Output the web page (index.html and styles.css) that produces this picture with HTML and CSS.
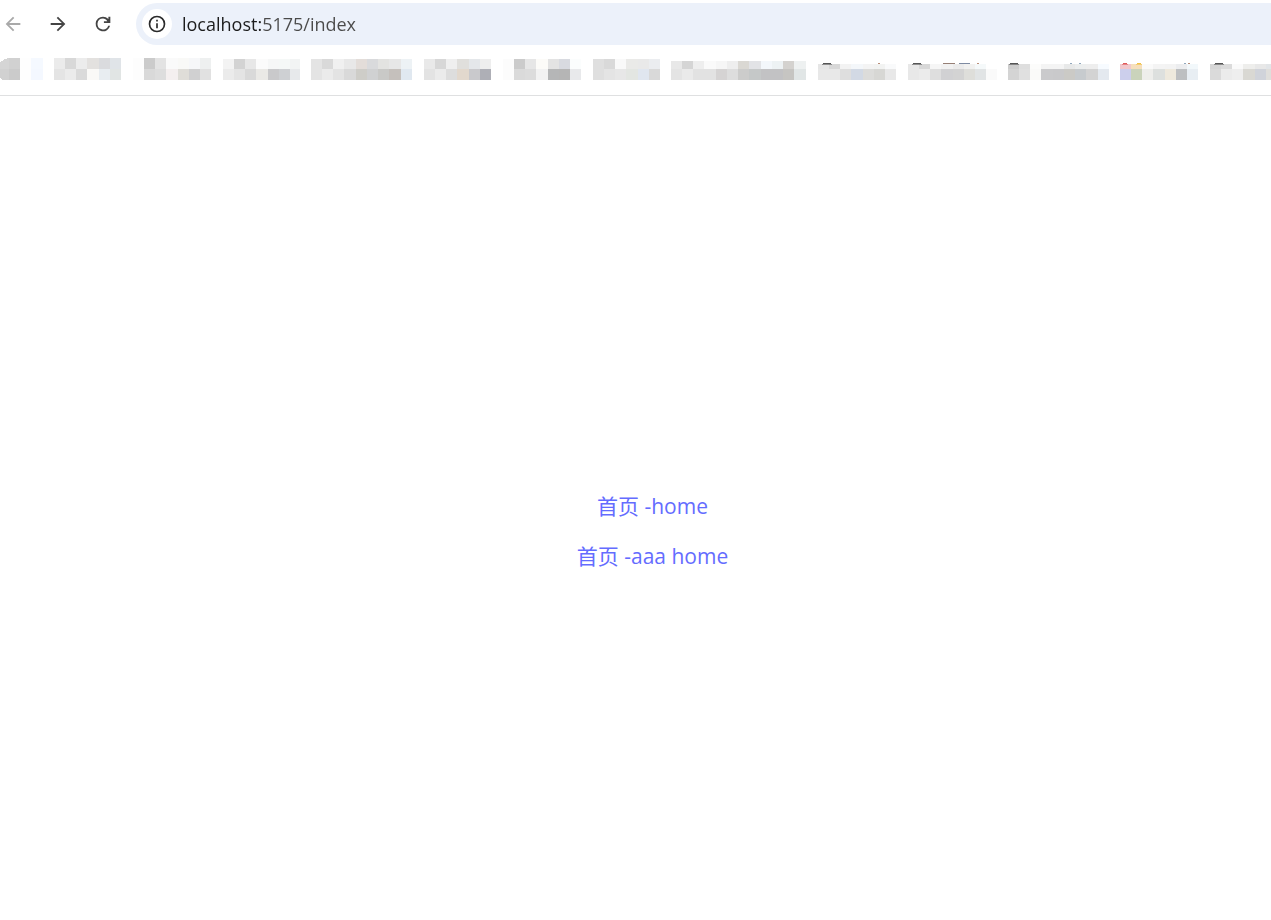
FILE: index.html
```html
<!DOCTYPE html>
<html lang="zh">
<head>
  <meta charset="UTF-8">
  <title>首页</title>
  <link rel="stylesheet" href="styles.css">
</head>
<body>
  <header>
    <div class="toolbar">
      <button class="nav-btn" aria-label="Back" disabled>
        <svg viewBox="0 0 24 24"><path d="M20 11H7.83l5.59-5.59L12 4l-8 8 8 8 1.41-1.41L7.83 13H20v-2z"/></svg>
      </button>
      <button class="nav-btn" aria-label="Forward">
        <svg viewBox="0 0 24 24"><path d="M12 4l-1.41 1.41L16.17 11H4v2h12.17l-5.58 5.59L12 20l8-8z"/></svg>
      </button>
      <button class="nav-btn" aria-label="Reload">
        <svg viewBox="0 0 24 24"><path d="M17.65 6.35A7.96 7.96 0 0 0 12 4a8 8 0 1 0 7.73 10h-2.08A6 6 0 1 1 12 6c1.9 0 3.6.9 4.7 2.9H13V11H20V4h-2.1v2.6z"/></svg>
      </button>
      <div class="address">
        <button class="info-btn" aria-label="Site information">
          <svg viewBox="0 0 24 24"><path d="M11 17h2v-6h-2v6zm1-15a10 10 0 1 0 0 20 10 10 0 0 0 0-20zm0 18a8 8 0 1 1 0-16 8 8 0 0 1 0 16zM11 9h2V7h-2v2z"/></svg>
        </button>
        <input type="text" class="url" aria-label="Address" value="localhost:5175/index">
      </div>
    </div>
    <nav class="bookmarks" id="bookmarks"></nav>
  </header>

  <main>
    <a href="#home">首页 -home</a>
    <a href="#aaa">首页 -aaa home</a>
  </main>

  <script src="bookmarks.js"></script>
</body>
</html>
```
FILE: styles.css
```css
body {
  margin: 0;
  min-height: 100vh;
  display: flex;
  flex-direction: column;
  font-family: "Open Sans", "Noto Sans CJK SC", sans-serif;
  background: white;
  overflow-x: hidden;
}

header {
  border-bottom: 1px solid #dfe0e1;
}

button {
  border: none;
  padding: 0;
  cursor: pointer;
}

.toolbar {
  display: flex;
  align-items: center;
  gap: 21px;
  padding: 3px 0 0 1px;
}

.nav-btn {
  width: 24px;
  height: 24px;
  display: flex;
  align-items: center;
  justify-content: center;
  background: none;
}

.nav-btn svg {
  width: 22px;
  height: 22px;
  fill: #444;
}

.nav-btn:disabled svg {
  fill: #a9a9a9;
}

.address {
  flex: 1;
  display: flex;
  align-items: center;
  gap: 10px;
  height: 42px;
  padding-left: 6px;
  background: #ecf1fa;
  border-radius: 21px 0 0 21px;
}

.info-btn {
  width: 30px;
  height: 30px;
  display: flex;
  align-items: center;
  justify-content: center;
  background: white;
  border-radius: 50%;
}

.info-btn svg {
  width: 20px;
  height: 20px;
  fill: #2a2a2a;
}

/* host is darker than the path */
.url {
  flex: 1;
  min-width: 0;
  padding: 0;
  border: none;
  outline: none;
  font-family: inherit;
  font-size: 18px;
  line-height: 28px;
  color: #4a4a4a;
  background: linear-gradient(to right, #1c1c1c 80px, #4a4a4a 80px);
  -webkit-background-clip: text;
  background-clip: text;
  -webkit-text-fill-color: transparent;
}

.bookmarks {
  display: flex;
  gap: 11px;
  padding: 13px 0 15px;
  overflow: hidden;
}

.bookmarks a {
  flex: none;
}

.bookmarks svg {
  display: block;
  height: 22px;
}

main {
  flex: 1;
  display: flex;
  flex-direction: column;
  align-items: center;
  justify-content: center;
  gap: 20px;
  padding: 46px 0 0 34px;
}

main a {
  color: #646cff;
  font-size: 21px;
  line-height: 30px;
  text-decoration: none;
}
```
FILE: bookmarks.js
```javascript
// Masked bookmarks: two rows of colour cells each.
// w = width, top = start of the first row, marks = [x, width, colour] above it
const bookmarks = [
  { w: 43, top: 0, round: true, rows: ["d5d5d5 d1d1d1 fefefe f5f9ff", "d1d1d1 cbcbcb fefefe f4f8ff"], edges: [0, 9, 20, 31, 43] },
  { w: 68, top: 0, rows: ["ebebeb d8d8d8 ececec e3e1df dadbde e0e4e8", "e4e4e4 ebebeb dadada faf9f7 e8edf1 e1e5e4"] },
  { w: 79, top: 0, rows: ["fdfdfd cbcbcb e3e3e3 fafafa f9f9f7 f6f7f9 eef0f0", "fdfdfd d9d9d9 dddddd f4efef dfddd8 d0d0d1 e1e1e1"] },
  { w: 77, top: 1, rows: ["f3f3f3 d3d3d3 e7e7e7 fbfbfb f6f7f7 f5f8f7 f2f4f4", "ebebeb e4e4e4 d9d9d9 eae9e6 c9c9cb ced0d3 e7e9eb"] },
  { w: 102, top: 1, rows: ["e4e4e4 d9d9d9 f0f0f0 e8e8e8 e3ddd9 d9dadc e3e3e1 e7e7e7 edf2f5", "e4e4e4 ebebeb e3e3e3 d9d9d9 cecdc8 d0d1d2 c9c9c7 c5c0bc e0e8f0"] },
  { w: 68, top: 1, rows: ["e9e9e9 d7d7d7 efefef e0dfdc e4e7ea eeeeee", "e3e3e3 ebebeb dddddd e2d8cd c9c9cc aeafb6"] },
  { w: 79, top: 1, rows: ["fcfcfc cbcbcb e6e6e6 fcfbf8 e3e3e3 d8dae0 fbfdfd", "fcfcfc dadada dcdcdc f2f2f2 b5b6b7 b5b5b5 e8e9eb"] },
  { w: 67, top: 1, rows: ["dfdfdf d9d9d9 f9f9f9 eaeae8 e9e9e9 ebedf0", "dfdfdf e4e4e4 e7e7e7 e3e6e2 e0e6ef d9d9d9"] },
  { w: 136, top: 3, rows: ["e8e8e8 d5d5d5 eeeeee fafafa f6f6f6 eeeeee dad8d3 e2e3e6 f3f7fb edf2f4 d4d2cf eef1f1", "e4e4e4 eaeaea e2e2e2 e2e2e2 d5d3d3 dddddd cccccb c5c8c8 c2c2c4 c2c2c4 c6c5c2 e1e6e6"] },
  { w: 79, top: 6, rows: ["e6e6e6 d8d8d8 f3f3f3 f4f7fa f4f4f4 f2f3f2 f9fafb", "e8e8e8 e8e8e8 dedede d2d9e4 dcdcda d7d7d4 e8e8e8"], marks: [[5, 8, "555555"], [60, 2, "b98d78"]] },
  { w: 89, top: 6, rows: ["e8e8e8 d8d8d8 f6f6f6 f1f1f1 ebebeb f1f1f0 f5f9fa ffffff", "e8e8e8 ebebeb dedede d1d1d3 d3d3d3 dededa e1e4e5 fafafa"], marks: [[5, 8, "555555"], [35, 12, "967f75"], [51, 11, "7e8ba2"], [69, 2, "b98d78"]] },
  { w: 101, top: 6, rows: ["cdcdcd dedede fcfcfb f4f4f4 f4f4f4 e8e9e9 eceeee eeeeee f7fbff", "d4d4d4 e0e0e0 fafaf9 cacacc c9c9cb cbcac6 c7cbce d3d3d3 e4e9ef"], marks: [[2, 8, "555555"], [62, 2, "91a8bd"], [71, 2, "91a8bd"]] },
  { w: 79, top: 6, rows: ["f1c8cc f5dfbc fafafa f4f4f4 f3f3f3 ecedef f2f8fb", "cccfec cad3bb eeeeeb dde0de eee9dd bdbfc1 e8eef3"], marks: [[3, 4, "e05a5a"], [17, 4, "f2c144"], [64, 2, "91a8bd"], [68, 2, "b98d78"]] },
  { w: 79, top: 6, rows: ["d6d6d6 dbdbdb fafafa eeeeec e8e8e8 e2e5e8 e8e8e8", "dadada ebebeb eeeeee d9d8d3 d0d3da dfdedb e0e0e0"], marks: [[5, 8, "555555"]] }
];

const CELL = 11.25;
const MIDDLE = 11;
const HEIGHT = 22;

function rect(x, y, width, height, color) {
  return `<rect x="${x}" y="${y}" width="${width}" height="${height}" fill="#${color}"/>`;
}

function drawBookmark(item) {
  let shapes = "";
  item.rows.forEach((row, r) => {
    const y = r === 0 ? item.top : MIDDLE;
    const height = r === 0 ? MIDDLE - item.top : HEIGHT - MIDDLE;
    row.split(" ").forEach((color, i) => {
      const left = item.edges ? item.edges[i] : Math.floor(i * CELL);
      const right = item.edges ? item.edges[i + 1] : Math.floor((i + 1) * CELL);
      shapes += rect(left, y, right - left, height, color);
    });
  });
  (item.marks || []).forEach(([x, width, color]) => {
    shapes += rect(x, item.top - 1, width, 1, color);
    // icon tops fade out on the line below
    if (width === 8 || width === 4) {
      shapes += rect(x - 1, item.top, width + 2, 1, color + "99");
    }
  });
  if (item.round) {
    shapes += '<path d="M0 0h9Q3 1 0 5zM0 20l2 2H0z" fill="#fff"/>';
  }
  return `<svg width="${item.w}" viewBox="0 0 ${item.w} ${HEIGHT}" shape-rendering="crispEdges">${shapes}</svg>`;
}

document.getElementById("bookmarks").innerHTML = bookmarks
  .map((item, i) => `<a href="#bookmark-${i + 1}" aria-label="Bookmark ${i + 1}">${drawBookmark(item)}</a>`)
  .join("");
```
